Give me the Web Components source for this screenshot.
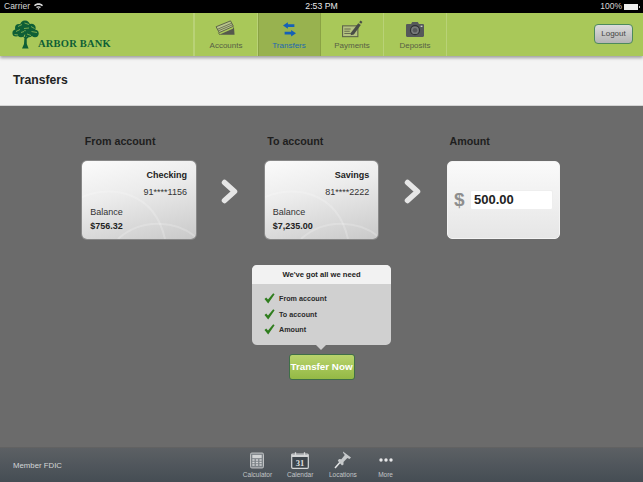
<!DOCTYPE html>
<html>
<head>
<meta charset="utf-8">
<style>
  html, body { margin: 0; padding: 0; }
  body { width: 643px; height: 482px; overflow: hidden; font-family: "Liberation Sans", Arial, sans-serif; background: #6b6b6b; }
  bank-app { display: flex; flex-direction: column; width: 643px; height: 482px; }
</style>
</head>
<body>
<bank-app>
  <status-bar></status-bar>
  <top-nav></top-nav>
  <page-title>Transfers</page-title>
  <transfer-panel></transfer-panel>
  <bottom-bar></bottom-bar>
</bank-app>

<script>
class BankApp extends HTMLElement {
  constructor() {
    super();
    this.attachShadow({ mode: "open" });
    this.shadowRoot.innerHTML = `<style>:host { display: flex; flex-direction: column; }</style><slot></slot>`;
  }
}

class StatusBar extends HTMLElement {
  constructor() {
    super();
    this.attachShadow({ mode: "open" });
    this.shadowRoot.innerHTML = `
      <style>
        :host { display: grid; grid-template-columns: 1fr auto 1fr; align-items: center; height: 13px; padding: 0 4px; box-sizing: border-box;
                background: #000; color: #d8d8d8; font-size: 8.5px; line-height: 13px; }
        .left { display: flex; align-items: center; gap: 4px; }
        .right { display: flex; align-items: center; justify-content: flex-end; gap: 2px; }
        .time { color: #e8e8e8; font-size: 8.7px; }
        .batt { width: 14px; height: 6px; background: #eee; margin-right: 1px; position: relative; }
        .batt::after { content: ""; position: absolute; right: -2px; top: 2px; width: 1px; height: 2px; background: #bbb; }
      </style>
      <div class="left"><span>Carrier</span>
        <svg width="9" height="7" viewBox="0 0 9 7"><path d="M0 2.2C2.5-.3 6.5-.3 9 2.2L8 3.3C6 1.4 3 1.4 1 3.3Z M2 4.1C3.4 2.8 5.6 2.8 7 4.1L6 5.1C5.1 4.3 3.9 4.3 3 5.1Z M3.6 5.6C4.1 5.1 4.9 5.1 5.4 5.6L4.5 6.8Z" fill="#ddd"/></svg>
      </div>
      <span class="time">2:53 PM</span>
      <div class="right"><span>100%</span><span class="batt"></span></div>`;
  }
}

const NAV_ICONS = {
  accounts: `<svg width="22" height="18" viewBox="0 0 24 20">
    <g fill="none" stroke="#5d6349" stroke-width="1.1">
      <path d="M1 7.5 17 1l3.2 6L4.5 14Z" fill="#b8c48c"/>
      <path d="M2.6 10.3 18.3 3.6M3.6 12 19.3 5.3" stroke-width=".9"/>
    </g>
    <path d="M5 16.2 19.5 9.8 20.8 7.5 21.5 16.5H5.5Z" fill="#55584d"/>
    <path d="M3.5 14 5 16.5" stroke="#5d6349" stroke-width="1" fill="none"/>
  </svg>`,
  transfers: `<svg width="13" height="15" viewBox="0 0 16 18" fill="#1460b8">
    <path d="M0 4 6 0V2.4H14V5.8H6V8Z"/>
    <path d="M16 13.5 10 9.5V11.7H2V15.2H10V17.5Z"/>
  </svg>`,
  payments: `<svg width="22" height="18" viewBox="0 0 24 20">
    <rect x="1.5" y="6.5" width="17" height="12" fill="#b4c27f" stroke="#5d6349" stroke-width="1.2"/>
    <path d="M3.5 10h7M3.5 12.5h6M3.5 15h11" stroke="#5d6349" stroke-width="1" fill="none"/>
    <path d="M11 14 19 3.5 21.8 5.5 14 16 10.6 17Z" fill="#484c46"/>
    <path d="M20 2.5 21.5.6 23.6 2.2 22.2 4.2Z" fill="#484c46"/>
  </svg>`,
  deposits: `<svg width="18" height="16" viewBox="0 0 16 14">
    <path d="M1 2.5H4.5L5.5 .8H10.5L11.5 2.5H15a1 1 0 0 1 1 1V13a1 1 0 0 1-1 1H1a1 1 0 0 1-1-1V3.5a1 1 0 0 1 1-1Z" fill="#55585a"/>
    <circle cx="8" cy="8" r="4" fill="#777a7a" stroke="#2e3032" stroke-width="1"/>
    <circle cx="8" cy="8" r="2" fill="#55585a"/>
    <rect x="13" y="4" width="1.6" height="1.2" fill="#ccc"/>
  </svg>`
};

class NavTab extends HTMLElement {
  constructor() {
    super();
    this.attachShadow({ mode: "open" });
  }
  connectedCallback() {
    this.shadowRoot.innerHTML = `
      <style>
        :host { display: flex; flex-direction: column; align-items: center; width: 63px; box-sizing: border-box;
                border-right: 1px solid #b9d277; color: #575f45; font-size: 8px; }
        :host([active]) { background: #98b24f; color: #1c68ae; border-right: 1px solid #8aa244; box-shadow: inset 1px 0 0 #8aa244; }
        .icon { height: 22px; margin-top: 5px; display: flex; align-items: center; justify-content: center; }
        .label { line-height: 11px; }
      </style>
      <div class="icon">${NAV_ICONS[this.getAttribute("icon")]}</div>
      <div class="label"><slot></slot></div>`;
  }
}

class TopNav extends HTMLElement {
  constructor() {
    super();
    this.attachShadow({ mode: "open" });
    this.shadowRoot.innerHTML = `
      <style>
        :host { display: flex; height: 43px; box-sizing: border-box; background: #a9c859; position: relative; z-index: 1;
                box-shadow: 0 2px 3px rgba(0,0,0,.35); }
        .logo { width: 195px; box-sizing: border-box; padding: 7px 0 0 12px; display: flex; align-items: flex-start; border-right: 2px solid #b9d277; }
        .logo span { font-family: "Liberation Serif", serif; font-weight: bold; font-size: 10.5px; letter-spacing: .2px; color: #0f5f36; margin: 18px 0 0 -1px; line-height: 12px; white-space: nowrap; }
        .tabs { display: flex; }
        .spacer { flex: 1; }
        .logout { align-self: center; margin: 0 10px 0 0; width: 39px; height: 20px; box-sizing: border-box; border: 1px solid #4d8a5c; border-radius: 4px;
                  background: linear-gradient(#dcdcdc, #b4b4b4); color: #444; font-size: 8px; line-height: 18px; text-align: center; position: relative; top: -.5px; }
      </style>
      <div class="logo">
        <svg width="27" height="29" viewBox="0 0 27 29">
          <path d="M12.4 18 12 24 10 28.6H16.6L14.8 24 14.7 19 18 16 14.6 17 13.5 14 12.6 17 9 15Z" fill="#0f5f36"/>
          <g fill="#0f5f36">
            <circle cx="13" cy="5.5" r="5"/><circle cx="7" cy="8" r="4"/><circle cx="19.5" cy="8" r="4.2"/>
            <circle cx="4" cy="13" r="3.6"/><circle cx="23" cy="13.5" r="3.7"/><circle cx="9" cy="13" r="4.2"/><circle cx="17" cy="13" r="4.2"/>
          </g>
          <path d="M6 6.5 10 4.5M12.5 3 17 4.5M4 11.5 8 9.5M12 8.5 17 8M19 6.5 22.5 8.5M19.5 11.5 25 12.5M2.5 14.5 6 15M9 12.5 12 11.5M15 14 19 15.5" stroke="#a9c859" stroke-width=".7" fill="none"/>
        </svg>
        <span>ARBOR BANK</span>
      </div>
      <div class="tabs">
        <nav-tab icon="accounts">Accounts</nav-tab>
        <nav-tab icon="transfers" active>Transfers</nav-tab>
        <nav-tab icon="payments">Payments</nav-tab>
        <nav-tab icon="deposits">Deposits</nav-tab>
      </div>
      <div class="spacer"></div>
      <div class="logout">Logout</div>`;
  }
}

class PageTitle extends HTMLElement {
  constructor() {
    super();
    this.attachShadow({ mode: "open" });
    this.shadowRoot.innerHTML = `
      <style>
        :host { display: flex; align-items: center; height: 50px; padding: 0 13px 1px; box-sizing: border-box; background: #f4f4f4;
                border-bottom: 1px solid #d4d4d4; color: #222; font-size: 12.2px; font-weight: bold; }
      </style>
      <slot></slot>`;
  }
}

class AccountCard extends HTMLElement {
  constructor() {
    super();
    this.attachShadow({ mode: "open" });
  }
  connectedCallback() {
    const a = (n) => this.getAttribute(n);
    this.shadowRoot.innerHTML = `
      <style>
        :host { display: block; position: relative; width: 113.7px; height: 78px; box-sizing: border-box; border-radius: 5px; overflow: hidden; color: #333; font-size: 9px;
                background: linear-gradient(165deg, #fbfbfb 0%, #ececec 40%, #c9c9c9 100%); box-shadow: 0 0 0 1px rgba(255,255,255,.2); }
        svg { position: absolute; left: 0; top: 0; }
        .content { position: relative; display: flex; flex-direction: column; height: 100%; box-sizing: border-box; padding: 8px 9px 0 8px; }
        .name { text-align: right; font-weight: bold; color: #222; line-height: 12px; }
        .num { text-align: right; margin-top: 5px; line-height: 12px; }
        .bal { margin-top: 8px; line-height: 12px; }
        .amt { margin-top: 2px; font-weight: bold; color: #222; line-height: 12px; }
      </style>
      <svg width="114" height="78" viewBox="0 0 114 78" fill="none" stroke="rgba(255,255,255,.2)" stroke-width="2">
        <path d="M0 36C30 24 72 30 83 78"/>
        <path d="M36 78C60 56 95 60 114 76"/>
      </svg>
      <div class="content">
        <div class="name">${a("name")}</div>
        <div class="num">${a("number")}</div>
        <div class="bal">Balance</div>
        <div class="amt">${a("balance")}</div>
      </div>`;
  }
}

class AmountCard extends HTMLElement {
  constructor() {
    super();
    this.attachShadow({ mode: "open" });
    this.shadowRoot.innerHTML = `
      <style>
        :host { display: flex; align-items: center; justify-content: space-between; width: 113px; height: 78px; box-sizing: border-box; padding: 0 6px 0 6px;
                border: 1px solid #f4f4f4; border-radius: 5px; background: linear-gradient(#fafafa, #e6e6e6); }
        .cur { color: #8e8e8e; font-size: 19px; font-weight: bold; line-height: 20px; }
        .input { width: 83px; height: 20px; background: #fff; border: 1px solid #eee; border-radius: 2px; padding-left: 3px; box-sizing: border-box;
                 color: #222; font-size: 13px; font-weight: bold; line-height: 18px; }
      </style>
      <span class="cur">$</span>
      <div class="input"><slot></slot></div>`;
  }
}

class FlowColumn extends HTMLElement {
  constructor() {
    super();
    this.attachShadow({ mode: "open" });
  }
  connectedCallback() {
    this.shadowRoot.innerHTML = `
      <style>
        :host { display: flex; flex-direction: column; width: 113.7px; }
        .head { color: #1e1e1e; font-size: 10.7px; font-weight: bold; line-height: 14px; padding-left: 2.5px; margin-bottom: 13px; }
      </style>
      <div class="head">${this.getAttribute("label")}</div>
      <slot></slot>`;
  }
}

class FlowArrow extends HTMLElement {
  constructor() {
    super();
    this.attachShadow({ mode: "open" });
    this.shadowRoot.innerHTML = `
      <style>:host { display: flex; justify-content: center; align-items: flex-start; width: 68.7px; padding-top: 45px; box-sizing: border-box; }</style>
      <svg width="18" height="25" viewBox="0 0 18 25">
        <path d="M3.5 3.5 13.5 12.5 3.5 21.5" fill="none" stroke="#e6e6e6" stroke-width="5.5" stroke-linecap="round" stroke-linejoin="round"/>
      </svg>`;
  }
}

class ChecklistRow extends HTMLElement {
  constructor() {
    super();
    this.attachShadow({ mode: "open" });
    this.shadowRoot.innerHTML = `
      <style>
        :host { display: flex; align-items: center; gap: 4px; height: 15.5px; color: #2a2a2a; font-size: 7.2px; font-weight: bold; }
      </style>
      <svg width="11" height="11" viewBox="0 0 11 11"><path d="M.5 6 2.2 4.4 4 6.6 9.2 .3 10.6 1.2 4.2 10.6Z" fill="#2f7d1e"/></svg>
      <slot></slot>`;
  }
}

class SummaryPopup extends HTMLElement {
  constructor() {
    super();
    this.attachShadow({ mode: "open" });
    this.shadowRoot.innerHTML = `
      <style>
        :host { display: block; position: relative; width: 139px; height: 80px; border-radius: 5px; background: #d0d0d0; }
        .head { height: 19px; line-height: 19px; background: #f2f2f2; border-radius: 5px 5px 0 0; text-align: center; color: #222; font-size: 7.6px; font-weight: bold; }
        .list { padding: 7px 0 0 12px; }
        .tail { position: absolute; left: 64px; bottom: -5px; width: 0; height: 0; border-left: 5px solid transparent; border-right: 5px solid transparent; border-top: 5px solid #d0d0d0; }
      </style>
      <div class="head">We've got all we need</div>
      <div class="list"><slot></slot></div>
      <div class="tail"></div>`;
  }
}

class TransferPanel extends HTMLElement {
  constructor() {
    super();
    this.attachShadow({ mode: "open" });
    this.shadowRoot.innerHTML = `
      <style>
        :host { display: flex; flex-direction: column; align-items: center; flex: 1; background: #6b6b6b; padding-top: 28px; box-sizing: border-box; }
        .flow { display: flex; }
        .go { margin-top: 9px; width: 66px; height: 26px; box-sizing: border-box; border: 1px solid #3f6e48; border-radius: 3px;
              background: linear-gradient(#b8d36c, #94b945); color: #fff; font-size: 9.8px; font-weight: bold; line-height: 24px; text-align: center; white-space: nowrap; }
        summary-popup { margin-top: 26px; }
      </style>
      <div class="flow">
        <flow-column label="From account"><account-card name="Checking" number="91****1156" balance="$756.32"></account-card></flow-column>
        <flow-arrow></flow-arrow>
        <flow-column label="To account"><account-card name="Savings" number="81****2222" balance="$7,235.00"></account-card></flow-column>
        <flow-arrow></flow-arrow>
        <flow-column label="Amount"><amount-card>500.00</amount-card></flow-column>
      </div>
      <summary-popup>
        <checklist-row>From account</checklist-row>
        <checklist-row>To account</checklist-row>
        <checklist-row>Amount</checklist-row>
      </summary-popup>
      <div class="go">Transfer Now</div>`;
  }
}

const TOOL_ICONS = {
  calc: `<svg width="14" height="17" viewBox="0 0 15 17">
    <rect x=".5" y=".5" width="14" height="16" rx="1.5" fill="#7d8388" stroke="#c8cacb"/>
    <rect x="2.5" y="2.5" width="10" height="3.5" fill="#d2d4d5"/>
    <path d="M2.5 8h2.4M6.3 8h2.4M10.1 8h2.4M2.5 10.6h2.4M6.3 10.6h2.4M10.1 10.6h2.4M2.5 13.2h2.4M6.3 13.2h2.4M10.1 13.2h2.4" stroke="#d2d4d5" stroke-width="1.6"/>
  </svg>`,
  cal: `<svg width="18" height="17" viewBox="0 0 18 17">
    <rect x=".7" y="2" width="16.6" height="14.3" rx="1" fill="#3c444b" stroke="#d4d6d7" stroke-width="1.2"/>
    <rect x="1" y="2.5" width="16" height="2.5" fill="#d4d6d7"/>
    <path d="M4.5 .3v3.5M13.5 .3v3.5" stroke="#d4d6d7" stroke-width="1.3"/>
    <text x="9" y="13.8" text-anchor="middle" font-family="Liberation Serif, serif" font-weight="bold" font-size="8.5" fill="#e0e0e0">31</text>
  </svg>`,
  pin: `<svg width="18" height="18" viewBox="0 0 18 18">
    <path d="M9 .5 17 6.5 15.5 8 13.3 7 9.5 11 9.5 13.5 8 14.5 3.8 9.7 5 8 7.4 8.3 10.8 4 9.2 2Z" fill="#c6c9cb"/>
    <path d="M5.8 11.5 1 17" stroke="#e4e5e6" stroke-width="1.5"/>
  </svg>`,
  more: `<svg width="14" height="4" viewBox="0 0 14 4" fill="#e6e7e8"><circle cx="2" cy="2" r="1.7"/><circle cx="7" cy="2" r="1.7"/><circle cx="12" cy="2" r="1.7"/></svg>`
};

class ToolItem extends HTMLElement {
  constructor() {
    super();
    this.attachShadow({ mode: "open" });
  }
  connectedCallback() {
    this.shadowRoot.innerHTML = `
      <style>
        :host { display: flex; flex-direction: column; align-items: center; width: 42.7px; color: #c2c5c7; font-size: 6.5px; }
        .icon { height: 18px; margin-top: 3px; margin-bottom: 1px; display: flex; align-items: center; justify-content: center; }
        .label { line-height: 9px; white-space: nowrap; }
      </style>
      <div class="icon">${TOOL_ICONS[this.getAttribute("icon")]}</div>
      <div class="label"><slot></slot></div>`;
  }
}

class BottomBar extends HTMLElement {
  constructor() {
    super();
    this.attachShadow({ mode: "open" });
    this.shadowRoot.innerHTML = `
      <style>
        :host { display: grid; grid-template-columns: 1fr auto 1fr; height: 35px; padding: 0 13px; box-sizing: border-box; flex: none;
                background: linear-gradient(#5c6064, #454d54); border-top: 1px solid #626262; color: #d4d6d8; font-size: 7.8px; }
        .fdic { align-self: center; }
        .tools { display: flex; }
      </style>
      <div class="fdic">Member FDIC</div>
      <div class="tools">
        <tool-item icon="calc">Calculator</tool-item>
        <tool-item icon="cal">Calendar</tool-item>
        <tool-item icon="pin">Locations</tool-item>
        <tool-item icon="more">More</tool-item>
      </div>
      <div></div>`;
  }
}

customElements.define("bank-app", BankApp);
customElements.define("status-bar", StatusBar);
customElements.define("nav-tab", NavTab);
customElements.define("top-nav", TopNav);
customElements.define("page-title", PageTitle);
customElements.define("account-card", AccountCard);
customElements.define("amount-card", AmountCard);
customElements.define("flow-column", FlowColumn);
customElements.define("flow-arrow", FlowArrow);
customElements.define("checklist-row", ChecklistRow);
customElements.define("summary-popup", SummaryPopup);
customElements.define("transfer-panel", TransferPanel);
customElements.define("tool-item", ToolItem);
customElements.define("bottom-bar", BottomBar);
</script>
</body>
</html>
